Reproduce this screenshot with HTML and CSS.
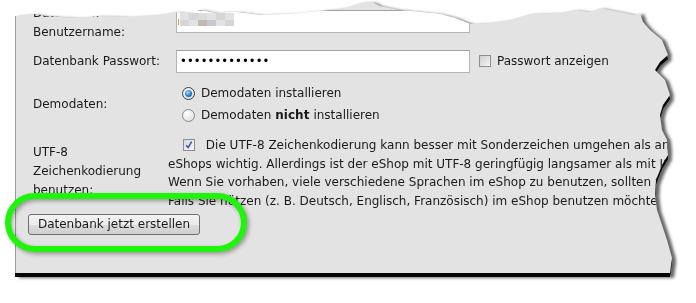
FILE: index.html
```html
<!DOCTYPE html>
<html lang="de">
<head>
<meta charset="utf-8">
<link rel="stylesheet" href="styles.css">
</head>
<body>
<div class="stage">
  <div class="shadow">
    <div class="panel">
      <div class="form">
        <div class="row row-user">
          <div class="label">Datenbank<br>Benutzername:</div>
          <div class="field">
            <div class="input">
              <span class="mark"></span>
              <span class="mosaic">
                <i class="m1"></i><i class="m2"></i><i class="m3"></i><i class="m1"></i><i class="m2"></i><i class="m1"></i>
                <i class="m2"></i><i class="m1"></i><i class="m4"></i><i class="m5"></i><i class="m1"></i><i class="m2"></i>
              </span>
            </div>
          </div>
        </div>
        <div class="row row-pass">
          <div class="label">Datenbank Passwort:</div>
          <div class="field field-inline">
            <div class="input input-pass">•••••••••••••</div>
            <span class="check"></span>
            <span class="check-text">Passwort anzeigen</span>
          </div>
        </div>
        <div class="row row-demo">
          <div class="label">Demodaten:</div>
          <div class="field radios">
            <div class="radio-line"><span class="radio on"></span>Demodaten installieren</div>
            <div class="radio-line"><span class="radio"></span>Demodaten <b>nicht</b> installieren</div>
          </div>
        </div>
        <div class="row row-utf">
          <div class="label label-utf">UTF-8<br>Zeichenkodierung<br>benutzen:</div>
          <div class="field para">
            <span class="check checked"><svg viewBox="0 0 10 10" width="10" height="10"><path d="M2.2 5.2 L4.2 7.6 L7.6 1.6" fill="none" stroke="#2a4da8" stroke-width="1.4"/></svg></span>
            <span class="first">Die UTF-8 Zeichenkodierung kann besser mit Sonderzeichen umgehen als andere Zeichenkodierungen.</span><br>
            eShops wichtig. Allerdings ist der eShop mit UTF-8 geringfügig langsamer als mit ISO-8859-1.<br>
            Wenn Sie vorhaben, viele verschiedene Sprachen im eShop zu benutzen, sollten Sie<br>
            Falls Sie nützen (z. B. Deutsch, Englisch, Französisch) im eShop benutzen möchten
          </div>
        </div>
      </div>
      <div class="actions">
        <button class="btn" type="button">Datenbank jetzt erstellen</button>
      </div>
    </div>
  </div>
  <div class="highlight"></div>
</div>
</body>
</html>
```

FILE: styles.css
```css
html, body {
  margin: 0;
  padding: 0;
  background: #ffffff;
}
body {
  width: 696px;
  height: 303px;
  overflow: hidden;
  font-family: "DejaVu Sans", Verdana, sans-serif;
  font-size: 12px;
  color: #1a1a1a;
}
.stage {
  position: relative;
  width: 696px;
  height: 303px;
}
.shadow {
  padding-left: 15px;
  filter: drop-shadow(0 4px 0.6px rgba(0, 0, 0, 0.95)) drop-shadow(4px 1px 1.5px rgba(0, 0, 0, 0.6));
}
.panel {
  width: 670px;
  height: 273px;
  box-sizing: border-box;
  background: #e3e3e3;
  border-left: 1px solid #9a9a9a;
  padding-left: 17px;
  overflow: hidden;
  clip-path: polygon(
    0 16px, 10px 15px, 20px 14px, 30px 16px, 45px 17px, 65px 18px, 85px 16px, 115px 17px,
    145px 15px, 160px 12px, 175px 14px, 185px 10px, 200px 13px, 220px 12px, 245px 15px,
    275px 14px, 305px 11px, 330px 8px, 345px 3px, 357px 2px, 365px 6px, 385px 10px,
    405px 12px, 425px 14px, 440px 18px, 455px 24px, 475px 23px, 495px 20px, 515px 14px,
    545px 13px, 560px 10px, 575px 12px, 585px 8px, 605px 12px, 620px 15px, 625px 13px,
    628px 22px, 635px 30px, 647px 40px, 653px 55px, 645px 62px, 640px 70px, 650px 80px,
    655px 95px, 648px 105px, 645px 115px, 647px 130px, 652px 140px, 653px 155px,
    647px 165px, 641px 180px, 640px 195px, 642px 210px, 647px 225px, 652px 240px,
    657px 258px, 655px 273px, 0 273px
  );
}
.form {
  display: flex;
  flex-direction: column;
}
.row {
  display: flex;
}
.label {
  width: 135px;
  flex: none;
  line-height: 19px;
}
.field {
  flex: 1;
  min-width: 0;
}
.row-user {
  height: 42px;
}
.row-user .label {
  padding-top: 4px;
}
.input {
  box-sizing: border-box;
  width: 294px;
  height: 23px;
  margin-left: 8px;
  background: #ffffff;
  border: 1px solid #b4b4b4;
  border-top-color: #a0a0a0;
  display: flex;
  align-items: center;
}
.row-user .input {
  margin-top: 10px;
  padding-left: 1px;
}
.mark {
  width: 1px;
  height: 6px;
  background: #e89a3a;
  margin-right: 1px;
  align-self: flex-start;
  margin-top: 8px;
}
.mosaic {
  display: grid;
  grid-template-columns: repeat(6, 9px);
  grid-template-rows: 7px 6px;
  margin-top: -4px;
}
.mosaic i {
  display: block;
}
.m1 { background: #e2e2e2; }
.m2 { background: #d6d6d6; }
.m3 { background: #dcdcdc; }
.m4 { background: #c4bab0; }
.m5 { background: #c8c8d0; }
.row-pass {
  height: 38px;
  align-items: center;
}
.field-inline {
  display: flex;
  align-items: center;
}
.input-pass {
  padding-left: 3px;
  font-size: 11.5px;
  letter-spacing: 0.1px;
  color: #000;
  line-height: 21px;
}
.check {
  box-sizing: border-box;
  width: 12px;
  height: 12px;
  border: 1px solid #8e8e8e;
  background: linear-gradient(135deg, #cfcfcf, #f4f4f4);
  display: inline-flex;
  align-items: center;
  justify-content: center;
}
.field-inline .check {
  margin-left: 9px;
}
.check-text {
  margin-left: 6px;
}
.row-demo {
  height: 48px;
  align-items: center;
}
.radios {
  display: flex;
  flex-direction: column;
}
.radio-line {
  height: 22px;
  display: flex;
  align-items: center;
}
.radio {
  box-sizing: border-box;
  width: 13px;
  height: 13px;
  border-radius: 50%;
  border: 1px solid #8a8a8a;
  background: radial-gradient(circle at 35% 30%, #ffffff, #d8d8d8);
  margin-left: 14px;
  margin-right: 6px;
  display: inline-flex;
  align-items: center;
  justify-content: center;
}
.radio.on {
  border-color: #3c3c3c;
}
.radio.on::after {
  content: "";
  width: 7px;
  height: 7px;
  border-radius: 50%;
  background: radial-gradient(circle at 40% 35%, #a8dcff, #2a7bc4 55%, #0b3c78);
}
.radio-line b {
  font-weight: bold;
  margin: 0 4px;
}
.row-utf .label-utf {
  padding-top: 15px;
}
.para {
  padding-top: 8px;
  line-height: 18.7px;
  white-space: nowrap;
}
.para .check {
  margin-left: 15px;
  margin-right: 7px;
  vertical-align: -1px;
  background: linear-gradient(135deg, #d8d8d8, #f7f7f7);
}
.actions {
  padding-top: 3px;
  margin-left: -5px;
}
.btn {
  box-sizing: border-box;
  width: 172px;
  height: 21px;
  padding: 0;
  border: 1px solid #707070;
  border-radius: 3px;
  background: linear-gradient(#f3f3f3 0%, #ebebeb 50%, #dddddd 51%, #cfcfcf 100%);
  font-family: "DejaVu Sans", Verdana, sans-serif;
  font-size: 12px;
  color: #1a1a1a;
  line-height: 19px;
}
.highlight {
  position: absolute;
  left: 5px;
  top: 193px;
  width: 242px;
  height: 59px;
  box-sizing: border-box;
  border: 6px solid #1ef50a;
  border-radius: 30px;
  filter: drop-shadow(2px 2px 2px rgba(0, 0, 0, 0.35));
}
```
